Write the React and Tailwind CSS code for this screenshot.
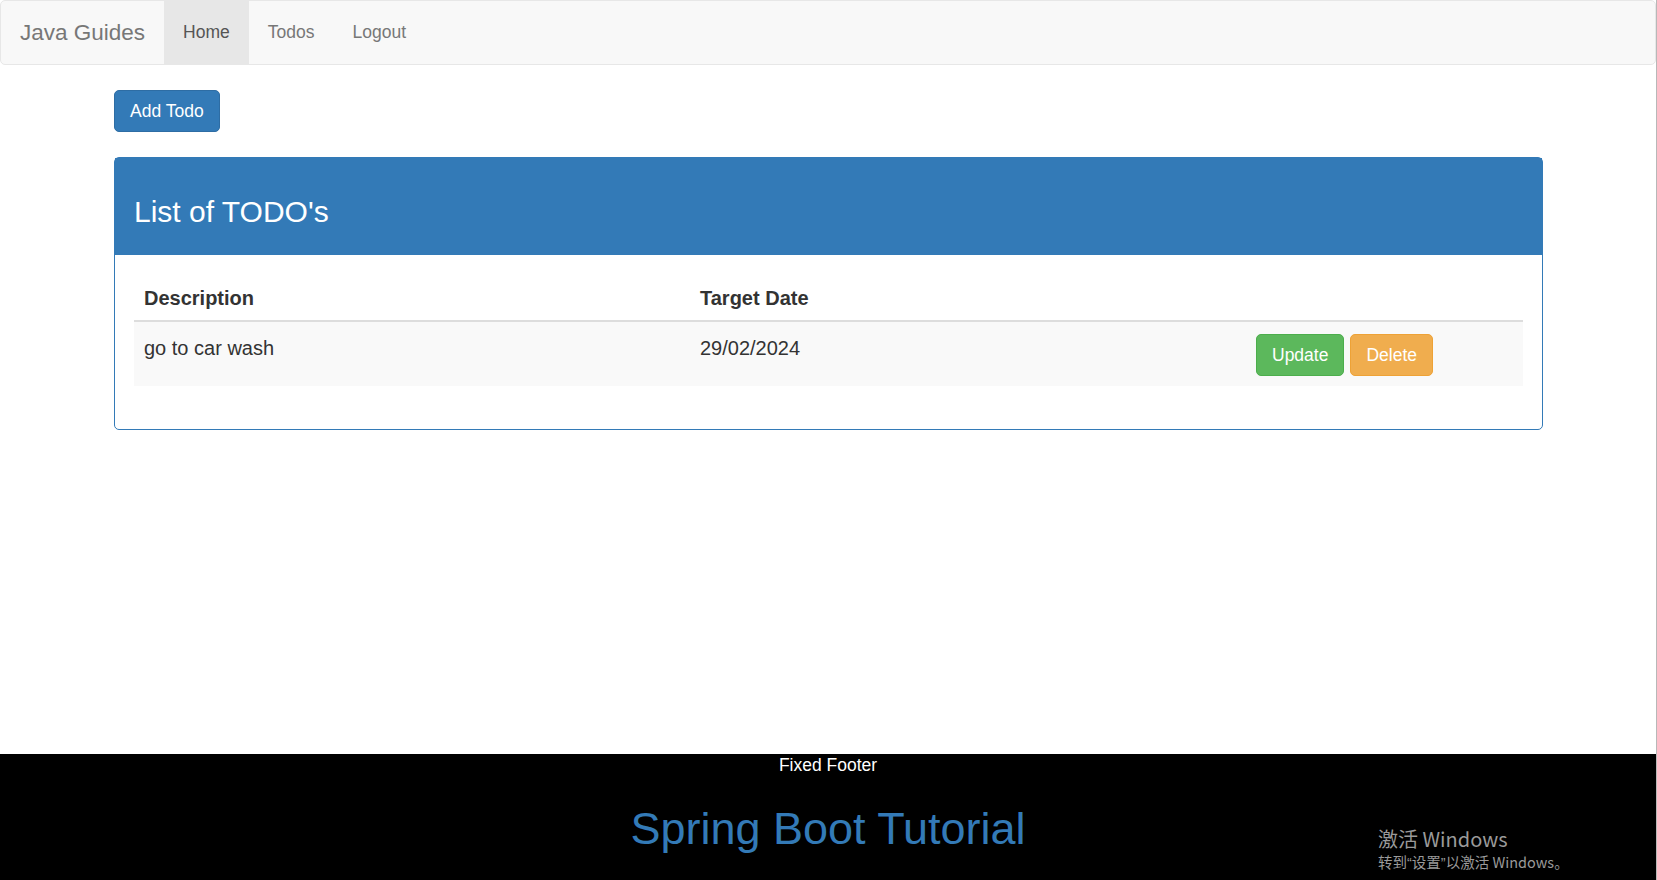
import { useState } from "react";

const todos = [{ id: 1, description: "go to car wash", targetDate: "29/02/2024" }];

const NavBar = () => {
  const [active, setActive] = useState("Home");
  const links = ["Home", "Todos", "Logout"];

  return (
    <nav className="flex h-[65px] items-stretch rounded-[5px] border border-[#e7e7e7] bg-[#f8f8f8]">
      <a className="flex items-center px-[19px] text-[22.5px] text-[#777]">Java Guides</a>
      {links.map((link) => (
        <a
          key={link}
          onClick={() => setActive(link)}
          className={
            link === active
              ? "flex cursor-pointer items-center bg-[#e7e7e7] px-[19px] text-[17.5px] text-[#555]"
              : "flex cursor-pointer items-center px-[19px] text-[17.5px] text-[#777]"
          }
        >
          {link}
        </a>
      ))}
    </nav>
  );
};

const TodoList = () => {
  return (
    <div className="rounded-[5px] border border-[#337ab7]">
      <div className="h-[97px] bg-[#337ab7] px-[19px] pt-[37px]">
        <h3 className="text-[30px] leading-[33px] text-white">List of TODO's</h3>
      </div>
      <div className="px-[19px] pb-[43px] pt-[19px]">
        <div className="grid grid-cols-[556px_556px_1fr] border-b-2 border-[#ddd] text-[20px] font-bold leading-[28px] text-[#333]">
          <div className="px-[10px] pb-[8px] pt-[10px]">Description</div>
          <div className="px-[10px] pb-[8px] pt-[10px]">Target Date</div>
          <div className="px-[10px] pb-[8px] pt-[10px]"></div>
        </div>
        {todos.map((todo) => (
          <div
            key={todo.id}
            className="grid h-[64px] grid-cols-[556px_556px_1fr] bg-[#f9f9f9] text-[20px] leading-[28px] text-[#333]"
          >
            <div className="px-[10px] pt-[12px]">{todo.description}</div>
            <div className="px-[10px] pt-[12px]">{todo.targetDate}</div>
            <div className="flex items-start gap-[6px] px-[10px] pt-[12px]">
              <button className="h-[42px] rounded-[5px] border border-[#4cae4c] bg-[#5cb85c] px-[15px] text-[17.5px] text-white">
                Update
              </button>
              <button className="h-[42px] rounded-[5px] border border-[#eea236] bg-[#f0ad4e] px-[15px] text-[17.5px] text-white">
                Delete
              </button>
            </div>
          </div>
        ))}
      </div>
    </div>
  );
};

const Footer = () => {
  return (
    <footer className="relative h-[126px] bg-black text-center">
      <p className="text-[17.5px] leading-[22px] text-white">Fixed Footer</p>
      <h1 className="mt-[29px] text-[45px] leading-[48px] text-[#337ab7]">Spring Boot Tutorial</h1>
      <div className="absolute left-[1378px] top-[72px] text-left font-['Noto_Sans_CJK_SC',sans-serif] text-[#9a9a9a]">
        <p className="text-[20px] leading-[26px]">激活 Windows</p>
        <p className="text-[14.5px] leading-[20px]">
          转到<span className="font-['Liberation_Sans',sans-serif]">“</span>设置
          <span className="font-['Liberation_Sans',sans-serif]">”</span>以激活 Windows。
        </p>
      </div>
    </footer>
  );
};

const App = () => {
  return (
    <div className="flex h-[880px] w-full overflow-hidden bg-white font-['Liberation_Sans',Arial,sans-serif]">
      <div className="flex flex-1 flex-col">
        <NavBar />
        <main className="flex-1 pl-[114px] pt-[25px]">
          <div className="w-[1429px]">
            <button className="h-[42px] rounded-[5px] border border-[#2e6da4] bg-[#337ab7] px-[15px] text-[17.5px] text-white">
              Add Todo
            </button>
            <div className="mt-[25px]">
              <TodoList />
            </div>
          </div>
        </main>
        <Footer />
      </div>
      <div className="w-px bg-[#b8b8b8]"></div>
    </div>
  );
};

export default App;
